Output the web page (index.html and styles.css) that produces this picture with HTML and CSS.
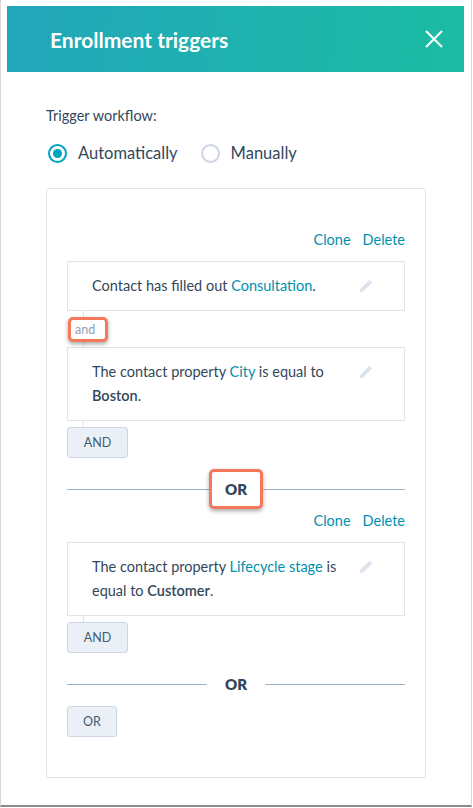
FILE: index.html
```html
<!DOCTYPE html>
<html lang="en">
<head>
    <meta charset="UTF-8">
    <meta name="viewport" content="width=device-width, initial-scale=1.0">
    <title>Enrollment triggers</title>
    <link rel="stylesheet" href="styles.css">
</head>
<body>
    <div class="frame">
        <div class="header">
            <h1>Enrollment triggers</h1>
            <button class="close" aria-label="Close">
                <svg width="18" height="18" viewBox="0 0 18 18">
                    <path d="M1 1 L17 17 M17 1 L1 17" stroke="#fff" stroke-width="2" fill="none"/>
                </svg>
            </button>
        </div>

        <div class="content">
            <div class="field-label">Trigger workflow:</div>
            <div class="radios">
                <label class="radio"><span class="dot checked"></span>Automatically</label>
                <label class="radio"><span class="dot"></span>Manually</label>
            </div>

            <div class="triggers">
                <div class="actions">
                    <a href="#">Clone</a>
                    <a href="#">Delete</a>
                </div>
                <div class="filter">
                    <p>Contact has filled out <a href="#">Consultation</a>.</p>
                    <svg class="pencil" width="14" height="14" viewBox="0 0 14 14">
                        <path d="M10.5 0.8 L13.2 3.5 L4.2 12.5 L0.8 13.2 L1.5 9.8 Z" fill="#dbe3ec"/>
                    </svg>
                </div>
                <div class="joiner">
                    <span class="and-label highlight">and</span>
                </div>
                <div class="filter">
                    <p>The contact property <a href="#">City</a> is equal to <b>Boston</b>.</p>
                    <svg class="pencil" width="14" height="14" viewBox="0 0 14 14">
                        <path d="M10.5 0.8 L13.2 3.5 L4.2 12.5 L0.8 13.2 L1.5 9.8 Z" fill="#dbe3ec"/>
                    </svg>
                </div>
                <div class="joiner short"></div>
                <button class="small-btn">AND</button>

                <div class="divider">
                    <span class="line"></span>
                    <span class="or-label highlight">OR</span>
                    <span class="line"></span>
                </div>

                <div class="actions tight">
                    <a href="#">Clone</a>
                    <a href="#">Delete</a>
                </div>
                <div class="filter">
                    <p>The contact property <a href="#">Lifecycle stage</a> is equal to <b>Customer</b>.</p>
                    <svg class="pencil" width="14" height="14" viewBox="0 0 14 14">
                        <path d="M10.5 0.8 L13.2 3.5 L4.2 12.5 L0.8 13.2 L1.5 9.8 Z" fill="#dbe3ec"/>
                    </svg>
                </div>
                <div class="joiner short"></div>
                <button class="small-btn">AND</button>

                <div class="divider">
                    <span class="line"></span>
                    <span class="or-label">OR</span>
                    <span class="line"></span>
                </div>

                <button class="small-btn or-btn">OR</button>
            </div>
        </div>
    </div>
</body>
</html>
```

FILE: styles.css
```css
body {
    font-family: Lato, "Open Sans", sans-serif;
    color: #33475b;
    background-color: #fff;
    margin: 0;
}

.frame {
    width: 470px;
    height: 799px;
    padding-top: 6px;
    border-left: 1px solid #d6d6d6;
    border-right: 1px solid #d6d6d6;
    border-bottom: 2px solid #8d8d8d;
    background-color: #fff;
}

.header {
    display: flex;
    align-items: center;
    justify-content: space-between;
    height: 66px;
    margin: 0 7px 0 6px;
    padding: 0 21px 0 43px;
    background: linear-gradient(100deg, #22a6bb 0%, #1eb3ad 60%, #1bbca3 100%);
}

.header h1 {
    margin: 0;
    color: #fff;
    font-size: 21px;
    font-weight: 700;
}

.close {
    background: none;
    border: none;
    padding: 0;
    width: 18px;
    height: 18px;
    cursor: pointer;
}

.content {
    padding: 34px 45px 0 45px;
}

.field-label {
    font-size: 14.5px;
    line-height: 20px;
}

.radios {
    display: flex;
    gap: 21px;
    margin-top: 17px;
}

.radio {
    display: flex;
    align-items: center;
    font-size: 16.5px;
    line-height: 20px;
    gap: 11px;
    padding-left: 2px;
}

.dot {
    width: 15px;
    height: 15px;
    border: 2px solid #cbd6e2;
    border-radius: 50%;
    box-sizing: content-box;
    position: relative;
}

.dot.checked {
    border-color: #00a4bd;
}

.dot.checked::after {
    content: "";
    position: absolute;
    left: 3px;
    top: 3px;
    width: 9px;
    height: 9px;
    border-radius: 50%;
    background-color: #00a4bd;
}

.triggers {
    margin-top: 25px;
    border: 1px solid #dfe3eb;
    border-radius: 3px;
    padding: 20px 20px 40px 20px;
}

.actions {
    display: flex;
    justify-content: flex-end;
    gap: 12px;
    margin-top: 21px;
    margin-bottom: 11px;
    font-size: 14.5px;
    line-height: 20px;
}

.actions.tight {
    margin-top: 2px;
}

a {
    color: #0091ae;
    text-decoration: none;
}

.filter {
    display: flex;
    align-items: flex-start;
    border: 1px solid #dfe3eb;
    padding: 12px 31px 12px 24px;
}

.filter p {
    flex: 1;
    margin: 0;
    font-size: 14.5px;
    line-height: 24px;
}

.filter b {
    font-weight: 600;
}

.pencil {
    margin-top: 5px;
    margin-left: 14px;
}

.joiner {
    height: 36px;
    margin-left: 16px;
    border-left: 1px solid #dfe3eb;
    display: flex;
    align-items: center;
}

.joiner.short {
    height: 6px;
}

.and-label {
    margin-left: -16px;
    width: 30px;
    height: 19px;
    padding-left: 4px;
    font-size: 12.5px;
    line-height: 19px;
    color: #8ea4bd;
    background-color: #fff;
}

.highlight {
    border: 3px solid #f6785a;
    border-radius: 5px;
    box-shadow: 0 2px 4px rgba(0, 0, 0, 0.35);
}

.small-btn {
    display: block;
    width: 61px;
    height: 31px;
    font-family: inherit;
    font-size: 12.5px;
    color: #425b76;
    background-color: #eaf0f6;
    border: 1px solid #cbd6e2;
    border-radius: 3px;
    cursor: pointer;
}

.or-btn {
    width: 50px;
    margin-top: 2px;
}

.divider {
    display: flex;
    align-items: center;
    height: 40px;
    margin-top: 11px;
}

.line {
    flex: 1;
    height: 1px;
    background-color: #99afc4;
}

.or-label {
    font-size: 15px;
    font-weight: 800;
    padding: 0 18px;
    line-height: 20px;
}

.or-label.highlight {
    height: 34px;
    line-height: 34px;
    padding: 0 13px;
    background-color: #fff;
}
```
